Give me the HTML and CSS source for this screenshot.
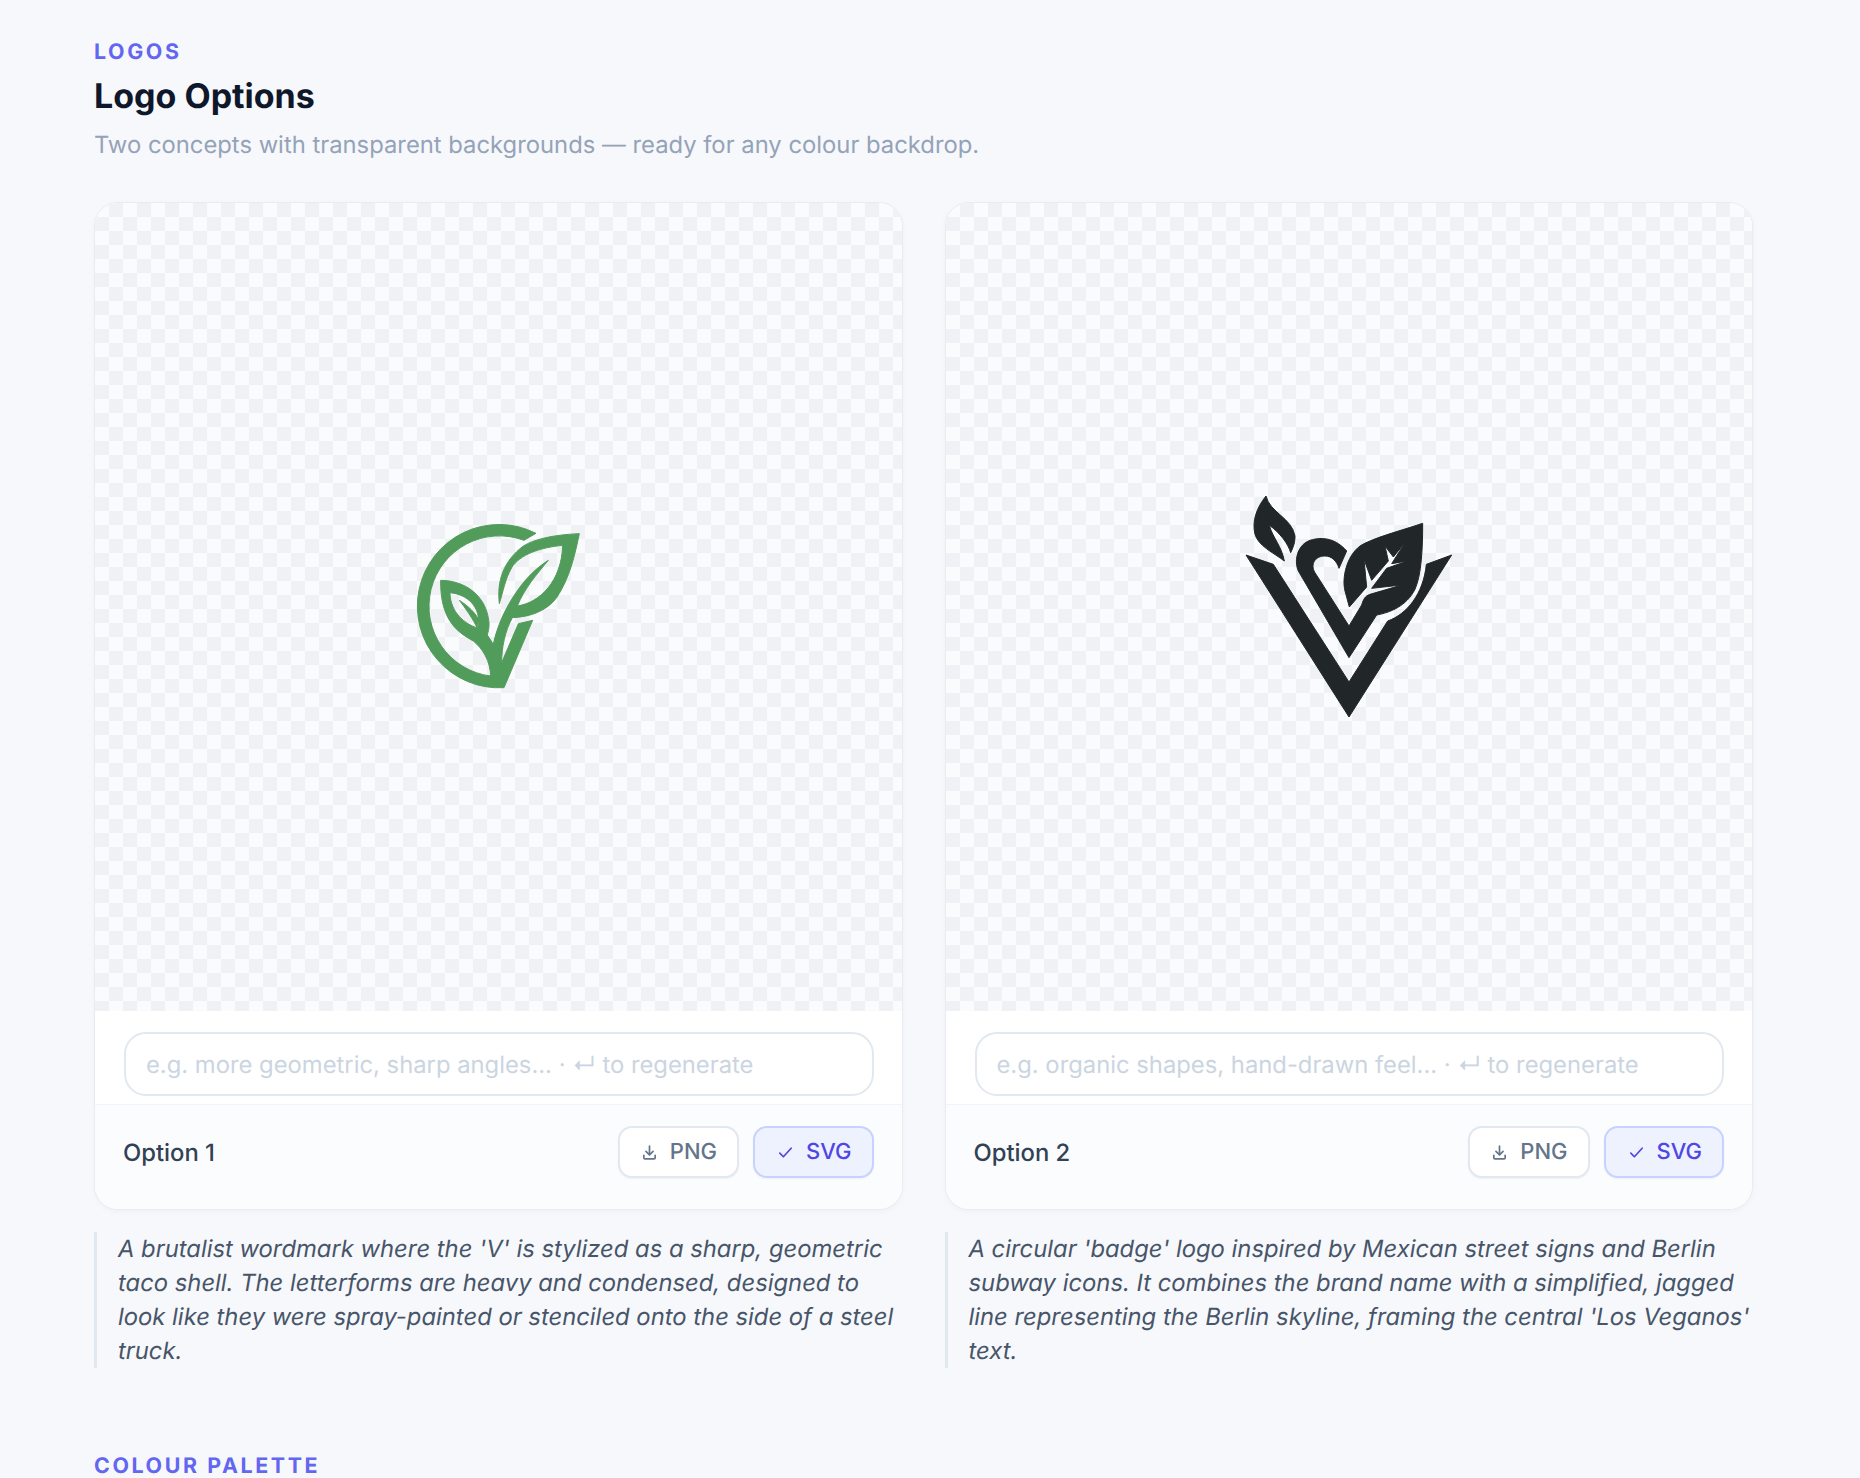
FILE: index.html
```html
<!DOCTYPE html>
<html lang="en">
<head>
<meta charset="utf-8">
<title>Logo Options</title>
<link rel="stylesheet" href="styles.css">
</head>
<body>
<main class="page">
  <section class="logos">
    <div class="eyebrow">LOGOS</div>
    <h1 class="title">Logo Options</h1>
    <p class="subtitle">Two concepts with transparent backgrounds — ready for any colour backdrop.</p>
    <div class="grid">
      <article class="option">
        <div class="card">
          <div class="preview">
            <svg class="logo logo-one" viewBox="-6 18 720 660" aria-label="Leaf logo">
              <path fill-rule="evenodd" d="M598 128C585 190 570 260 530 320C500 360 450 378 397 380C375 420 365 470 365 515L415 398L458 388L372 590A245 245 0 1 1 468 127L432 148A211 211 0 1 0 332 555C330 510 310 475 280 450C235 425 180 390 182 268C250 268 320 310 327 395C328 410 325 420 322 432L340 460C350 410 375 350 415 295C440 260 470 230 505 208C470 250 435 290 412 345C480 335 545 270 548 163C480 170 420 190 395 230C375 265 370 300 358 338C350 270 370 210 430 165C470 140 540 130 598 128ZM210 305C260 310 305 345 295 412C240 395 210 350 210 305ZM238 328C265 345 285 365 296 385L292 412C280 385 255 350 238 328Z"/>
            </svg>
          </div>
          <div class="prompt">
            <input class="prompt-input" type="text" placeholder="e.g. more geometric, sharp angles... · ↵ to regenerate">
          </div>
          <div class="footer">
            <span class="option-name">Option 1</span>
            <div class="actions">
              <button class="btn" type="button"><svg class="icon" viewBox="0 0 24 24"><path d="M12 3v12M7 10.5l5 5 5-5M4 16v3.5a1.5 1.5 0 0 0 1.5 1.5h13a1.5 1.5 0 0 0 1.5-1.5V16"/></svg>PNG</button>
              <button class="btn btn-active" type="button"><svg class="icon" viewBox="0 0 24 24"><path d="M4 13l5 5L20 6"/></svg>SVG</button>
            </div>
          </div>
        </div>
        <p class="desc">A brutalist wordmark where the 'V' is stylized as a sharp, geometric taco shell. The letterforms are heavy and condensed, designed to look like they were spray-painted or stenciled onto the side of a steel truck.</p>
      </article>
      <article class="option">
        <div class="card">
          <div class="preview">
            <svg class="logo logo-two" viewBox="27 3 720 750" aria-label="V leaf logo">
              <path d="M78 222L160 250L387 603L503 420C560 400 610 340 619 250L695 222L387 708Z"/>
              <path d="M380 210C350 175 310 165 270 178C235 190 220 235 235 270L387 530L470 402C510 395 560 375 585 325C605 280 608 200 608 127C540 150 460 170 420 195C380 225 365 290 375 330L388 378L440 318L432 235L455 298L505 240L495 195L520 228L555 185L515 248L562 240L500 262L455 322L545 312L450 340C435 345 430 355 425 372L387 435L285 275C270 250 285 225 315 225C335 225 350 240 357 262Z"/>
              <path d="M138 45C150 95 215 110 225 165C226 185 218 203 212 215C205 190 180 155 148 133C158 170 185 195 193 240C160 215 115 195 105 160C95 120 110 80 138 45Z"/>
            </svg>
          </div>
          <div class="prompt">
            <input class="prompt-input" type="text" placeholder="e.g. organic shapes, hand-drawn feel... · ↵ to regenerate">
          </div>
          <div class="footer">
            <span class="option-name">Option 2</span>
            <div class="actions">
              <button class="btn" type="button"><svg class="icon" viewBox="0 0 24 24"><path d="M12 3v12M7 10.5l5 5 5-5M4 16v3.5a1.5 1.5 0 0 0 1.5 1.5h13a1.5 1.5 0 0 0 1.5-1.5V16"/></svg>PNG</button>
              <button class="btn btn-active" type="button"><svg class="icon" viewBox="0 0 24 24"><path d="M4 13l5 5L20 6"/></svg>SVG</button>
            </div>
          </div>
        </div>
        <p class="desc">A circular 'badge' logo inspired by Mexican street signs and Berlin subway icons. It combines the brand name with a simplified, jagged line representing the Berlin skyline, framing the central 'Los Veganos' text.</p>
      </article>
    </div>
  </section>
  <section class="palette">
    <div class="eyebrow">COLOUR PALETTE</div>
  </section>
</main>
</body>
</html>
```
FILE: styles.css
```css
* { box-sizing: border-box; }
html, body { margin: 0; height: 1478px; overflow: hidden; background: #f7f8fc; }
body { font-family: Inter, "Liberation Sans", sans-serif; color: #0f172a; text-rendering: geometricPrecision; }
.page { padding: 39px 107px 0 94px; }
.eyebrow { font-size: 21.4px; line-height: 26px; font-weight: 700; letter-spacing: 2.6px; color: #6366f1; }
.title { margin: 10px 0 0; font-size: 34px; line-height: 44px; font-weight: 700; color: #0f172a; }
.subtitle { margin: 8px 0 0; font-size: 23.8px; line-height: 36px; color: #94a3b8; }
.grid { display: grid; grid-template-columns: 1fr 1fr; gap: 42px; margin-top: 39px; }
.card { background: #fff; border: 1.5px solid #e8ebf2; border-radius: 24px; overflow: hidden; box-shadow: 0 2px 6px rgba(15, 23, 42, .03); }
.preview {
  height: 808px; display: flex; align-items: center; justify-content: center;
  background-color: #fafbfd;
  background-image: conic-gradient(#eff1f5 25%, transparent 0 50%, #eff1f5 0 75%, transparent 0);
  background-size: 28px 28px;
}
.logo { display: block; filter: blur(.4px); stroke-width: 3; }
.logo-one { width: 240px; height: 220px; fill: #529c5b; stroke: #529c5b; }
.logo-two { width: 240px; height: 250px; fill: #212728; stroke: #212728; }
.prompt { padding: 21px 28px 8px 29px; border-bottom: 1.5px solid #f1f4f8; }
.prompt-input { display: block; width: 100%; height: 64px; padding: 0 20px; border: 2px solid #e2e8f0; border-radius: 22px; background: #fff; font: 23.8px Inter, "Liberation Sans", sans-serif; color: #334155; outline: none; text-rendering: geometricPrecision; }
.prompt-input::placeholder { color: #cbd5e1; opacity: 1; }
.footer { display: flex; align-items: center; justify-content: space-between; padding: 21px 28px 31px; background: #fbfcfe; }
.option-name { font-size: 23.8px; font-weight: 500; color: #334155; }
.actions { display: flex; gap: 14px; }
.btn { display: flex; align-items: center; gap: 12px; height: 52px; padding: 0 20px 0 21px; border: 2px solid #e2e8f0; border-radius: 14px; background: #fff; font: 500 22px Inter, "Liberation Sans", sans-serif; color: #64748b; box-shadow: 0 1px 2px rgba(15, 23, 42, .05); text-rendering: geometricPrecision; }
.btn-active { padding-left: 22px; background: #eef2ff; border-color: #c7d2fe; color: #4f46e5; }
.icon { width: 17px; height: 17px; fill: none; stroke: currentColor; stroke-width: 2.4; stroke-linecap: round; stroke-linejoin: round; }
.desc { margin: 22px 0 0; padding-left: 21px; border-left: 3px solid #e2e8f0; font-size: 23.8px; line-height: 34px; font-style: italic; color: #475569; }
.palette { margin-top: 85px; }
```
